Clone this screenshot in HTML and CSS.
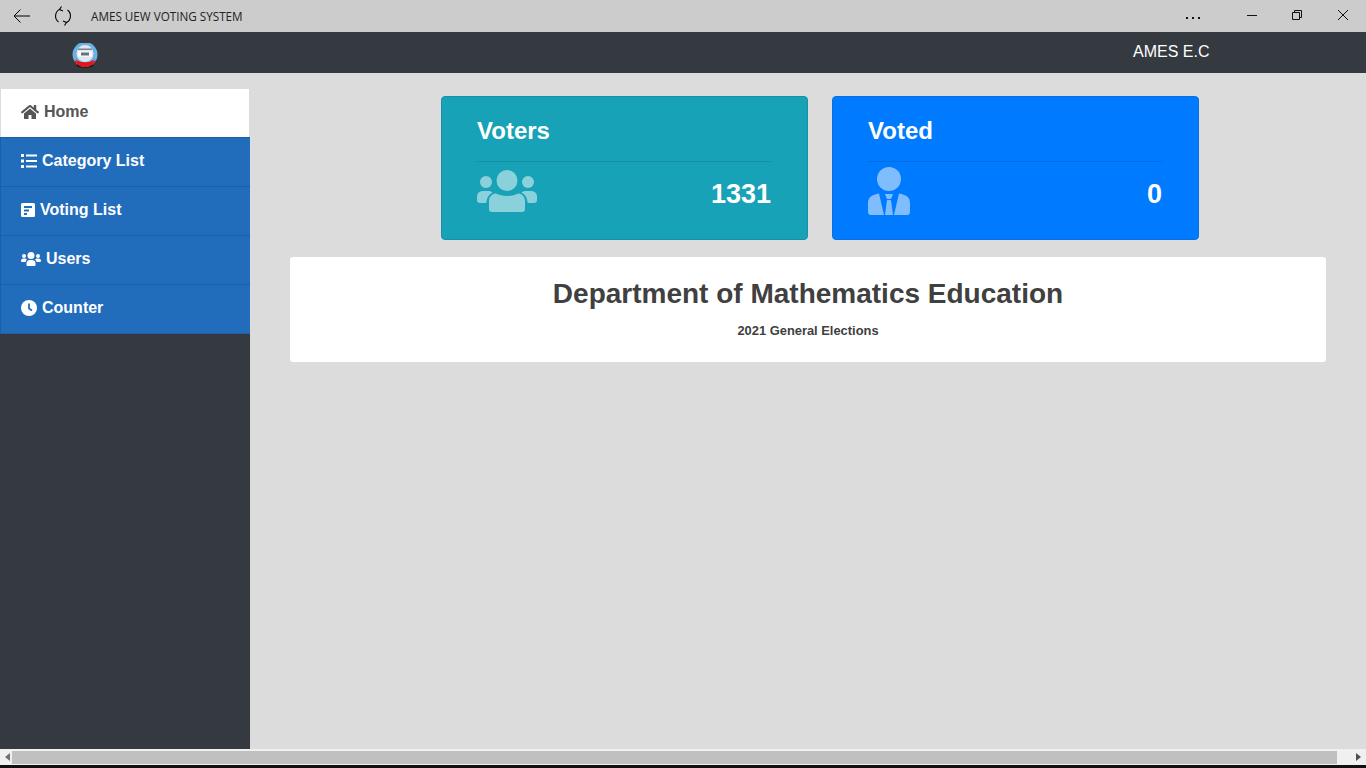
FILE: index.html
```html
<!DOCTYPE html>
<html lang="en">
<head>
  <meta charset="UTF-8" />
  <title>AMES UEW VOTING SYSTEM</title>
  <link rel="stylesheet" href="styles.css">
</head>

<body>
  <div class="titlebar">
    <div class="titlebar-left">
      <svg class="tb-icon" width="20" height="16" viewBox="0 0 20 16"><path d="M18 8H2M8.500 1.500L2 8l6.500 6.500" fill="none" stroke="#000" stroke-width="1"/></svg>
      <svg class="tb-icon" width="18" height="20" viewBox="0 0 18 20"><path d="M6.500 3A7.500 7.500 0 0 0 4.500 16M11.500 17A7.500 7.500 0 0 0 13.500 4M7.500 .5L5.500 3.500 9 5M10.500 19.500L12.500 16.500 9 15" fill="none" stroke="#000" stroke-width="1.100"/></svg>
      <span class="app-title">AMES UEW VOTING SYSTEM</span>
    </div>
    <div class="titlebar-right">
      <svg class="win-btn dots" width="16" height="16" viewBox="0 0 16 16"><path d="M1 9h2v2H1zM7 9h2v2H7zM13 9h2v2h-2z" fill="#111"/></svg>
      <svg class="win-btn min" width="12" height="12" viewBox="0 0 12 12"><path d="M1 5.500h10" stroke="#111" fill="none"/></svg>
      <svg class="win-btn restore" width="12" height="12" viewBox="0 0 12 12"><path d="M1.500 3.500h7v7h-7zM3.500 3.500v-2h7v7h-2" stroke="#111" fill="none"/></svg>
      <svg class="win-btn close" width="12" height="12" viewBox="0 0 12 12"><path d="M1 1l10 10M11 1L1 11" stroke="#111" fill="none"/></svg>
    </div>
  </div>

  <header class="navbar">
    <svg class="logo" width="26" height="25" viewBox="0 0 26 25">
      <ellipse cx="13" cy="22.500" rx="8.500" ry="2" fill="#111"/>
      <circle cx="13" cy="11.500" r="12.500" fill="#6ab2e6"/>
      <path d="M2 17.500a12.500 12.500 0 0 0 22 0q-11 4-22 0z" fill="#e8141c"/>
      <path d="M3 16a12.500 12.500 0 0 0 20 0q-10 7-20 0z" fill="#e8141c"/>
      <circle cx="13" cy="10.500" r="8.500" fill="#dfe8f0"/>
      <path d="M6 5.500h14V7H6z" fill="#7a8590"/>
      <path d="M6 8.500h14v5H6z" fill="#fff"/>
      <path d="M9 9.500h8v3H9z" fill="#66717b"/>
    </svg>
    <span class="brand">AMES E.C</span>
  </header>

  <div class="layout">
    <aside class="sidebar">
      <nav>
        <a href="#" class="side-link active">
          <svg class="side-icon" width="18" height="16" viewBox="0 0 576 512"><path fill="currentColor" d="M280.370 148.260L96 300.110V464a16 16 0 0 0 16 16l112.060-.29a16 16 0 0 0 15.920-16V368a16 16 0 0 1 16-16h64a16 16 0 0 1 16 16v95.640a16 16 0 0 0 16 16.050L464 480a16 16 0 0 0 16-16V300L295.670 148.260a12.190 12.190 0 0 0-15.300 0zM571.600 251.470L488 182.560V44.050a12 12 0 0 0-12-12h-56a12 12 0 0 0-12 12v72.610L318.470 43a48 48 0 0 0-61 0L4.340 251.470a12 12 0 0 0-1.600 16.900l25.500 31A12 12 0 0 0 45.150 301l235.220-193.740a12.190 12.190 0 0 1 15.300 0L530.900 301a12 12 0 0 0 16.900-1.600l25.500-31a12 12 0 0 0-1.700-16.930z"/></svg>
          Home
        </a>
        <a href="#" class="side-link">
          <svg class="side-icon" width="16" height="14" viewBox="0 0 16 14"><path fill="currentColor" d="M0 0h3v3H0zM0 5.500h3v3H0zM0 11h3v3H0zM5 .5h11v2H5zM5 6h11v2H5zM5 11.500h11v2H5z"/></svg>
          Category List
        </a>
        <a href="#" class="side-link">
          <svg class="side-icon" width="14" height="14" viewBox="0 0 14 14"><path fill="currentColor" fill-rule="evenodd" d="M1.500 0h11A1.500 1.500 0 0 1 14 1.500v11a1.500 1.500 0 0 1-1.500 1.500h-11A1.500 1.500 0 0 1 0 12.500v-11A1.500 1.500 0 0 1 1.500 0zM3 3v2h8V3zM3 6.500v2h5v-2zM3 10v2h3v-2z"/></svg>
          Voting List
        </a>
        <a href="#" class="side-link">
          <svg class="side-icon" width="20" height="14" viewBox="0 0 20 14"><g fill="currentColor"><circle cx="3" cy="4" r="2"/><circle cx="17" cy="4" r="2"/><circle cx="10" cy="3.500" r="3.500"/><path d="M0 9a2.500 2.500 0 0 1 2.500-2.500h2L6 7.500a4 4 0 0 0-1.500 2.500H1a1 1 0 0 1-1-1zM20 9a2.500 2.500 0 0 0-2.500-2.500h-2L14 7.500a4 4 0 0 1 1.500 2.500H19a1 1 0 0 0 1-1zM5.500 11.500a3.500 3.500 0 0 1 3-3.500h3a3.500 3.500 0 0 1 3 3.500V13a1 1 0 0 1-1 1h-7a1 1 0 0 1-1-1z"/></g></svg>
          Users
        </a>
        <a href="#" class="side-link last">
          <svg class="side-icon" width="16" height="16" viewBox="0 0 16 16"><circle cx="8" cy="8" r="8" fill="currentColor"/><path d="M8 3.500V8.500l3 2" fill="none" stroke="#226cbc" stroke-width="1.800"/></svg>
          Counter
        </a>
      </nav>
    </aside>

    <main class="content">
      <div class="stats">
        <div class="stat-card teal">
          <h3>Voters</h3>
          <div class="stat-body">
            <svg class="stat-icon users" width="60" height="42" viewBox="0 0 60 42">
              <circle cx="30" cy="10.500" r="10.500"/>
              <circle cx="9" cy="12" r="6"/>
              <circle cx="51" cy="12" r="6"/>
              <path d="M12 31c0-5 4-7.500 7-7.500 3 1.500 6.500 2.500 11 2.500s8-1 11-2.500c3 0 7 2.500 7 7.500v8a3 3 0 0 1-3 3H15a3 3 0 0 1-3-3z"/>
              <path d="M0 26.500A5.500 5.500 0 0 1 5.500 21h6c1.500 0 3 .5 4 1.500-3 1.500-5.500 4.500-6 9.500l-.5 1H3a3 3 0 0 1-3-3z"/>
              <path d="M60 26.500A5.500 5.500 0 0 0 54.500 21h-6c-1.500 0-3 .5-4 1.500 3 1.500 5.500 4.500 6 9.500l.5 1h6a3 3 0 0 0 3-3z"/>
            </svg>
            <span class="stat-num">1331</span>
          </div>
        </div>
        <div class="stat-card blue">
          <h3>Voted</h3>
          <div class="stat-body">
            <svg class="stat-icon" width="42" height="48" viewBox="0 0 42 48">
              <circle cx="21" cy="12" r="12"/>
              <path d="M0 36c0-6 4-8 11-9.500L16 48H3a3 3 0 0 1-3-3z"/>
              <path d="M42 36c0-6-4-8-11-9.500L26 48h13a3 3 0 0 0 3-3z"/>
              <path d="M17 27h8l-2 5h-4zM19 33h4l2 15h-8z"/>
            </svg>
            <span class="stat-num">0</span>
          </div>
        </div>
      </div>

      <section class="notice">
        <h2>Department of Mathematics Education</h2>
        <p>2021 General Elections</p>
      </section>
    </main>
  </div>

  <div class="hscroll">
    <svg class="arrow" width="6" height="8" viewBox="0 0 6 8"><path d="M5 0v8L0 4z" fill="#707070"/></svg>
    <div class="thumb"></div>
    <svg class="arrow right" width="6" height="8" viewBox="0 0 6 8"><path d="M1 0v8l5-4z" fill="#505050"/></svg>
  </div>
  <div class="screen-edge"></div>
</body>
</html>
```

FILE: styles.css
```css
:root {
  --dark: #343a40;
  --page-bg: #dcdcdc;
  --side-blue: #226cbc;
  --side-line: #1d5fa6;
  --text: #404040;
}

* {
  box-sizing: border-box;
}

html, body {
  height: 100%;
}

body {
  margin: 0;
  display: flex;
  flex-direction: column;
  height: 768px;
  overflow: hidden;
  font-family: 'Liberation Sans', sans-serif;
  background-color: var(--page-bg);
  color: var(--text);
}

/* window chrome */
.titlebar {
  height: 32px;
  flex: none;
  display: flex;
  justify-content: space-between;
  align-items: center;
  background-color: #cccccc;
}

.titlebar-left {
  display: flex;
  align-items: center;
  padding-left: 12px;
}

.tb-icon {
  margin-right: 22px;
  flex: none;
}

.app-title {
  font-family: 'Open Sans', sans-serif;
  font-size: 11.700px;
  color: #222;
  margin-left: -3px;
}

.titlebar-right {
  display: flex;
  align-items: center;
  padding-right: 17px;
}

.win-btn.min {
  margin-left: 45px;
  margin-top: -1px;
}

.win-btn.restore {
  margin-left: 33px;
  margin-top: -2px;
}

.win-btn.close {
  margin-left: 34px;
  margin-top: -3px;
}

.navbar {
  height: 41px;
  flex: none;
  display: flex;
  align-items: center;
  background-color: var(--dark);
  padding-left: 72px;
}

.logo {
  flex: none;
  margin-top: 6px;
  filter: blur(0.4px);
}

.brand {
  margin-left: 1035px;
  margin-top: -2px;
  font-size: 16px;
  color: #fff;
}

.layout {
  flex: 1;
  display: flex;
  min-height: 0;
}

/* sidebar */
.sidebar {
  width: 250px;
  flex: none;
  margin-top: 16px;
  background-color: var(--dark);
}

.side-link {
  display: flex;
  align-items: center;
  gap: 5px;
  height: 49px;
  padding: 0 0 2px 20px;
  font-size: 16px;
  font-weight: 700;
  text-decoration: none;
  color: #fff;
  background-color: var(--side-blue);
  border-top: 1px solid var(--side-line);
  border-left: 1px solid var(--side-line);
}

.side-link.last {
  height: 50px;
  padding-bottom: 3px;
  border-bottom: 1px solid var(--side-line);
}

.side-link.active {
  height: 48px;
  color: #555;
  background-color: #fff;
  border: none;
  border-left: 1px solid var(--page-bg);
  border-right: 1px solid var(--page-bg);
}

.side-icon {
  flex: none;
}

/* main */
.content {
  flex: 1;
  padding: 23px 40px 0;
}

.stats {
  display: flex;
  gap: 24px;
  padding-left: 151px;
}

.stat-card {
  width: 367px;
  height: 144px;
  padding: 20px 36px 0 35px;
  border-radius: 4px;
  border: 1px solid transparent;
  color: #fff;
}

.stat-card h3 {
  margin: 0;
  height: 44px;
  font-size: 24px;
  line-height: 28px;
  font-weight: 700;
}

.stat-card.teal {
  background-color: #17a2b8;
  border-color: #1592a6;
}

.stat-card.blue {
  background-color: #007bff;
  border-color: #0870e0;
}

.stat-body {
  display: flex;
  justify-content: space-between;
  border-top: 1px solid rgba(0, 0, 0, 0.1);
}

.stat-icon {
  fill: rgba(255, 255, 255, 0.5);
  margin-top: 5px;
}

.stat-icon.users {
  margin-top: 8px;
}

.stat-num {
  font-size: 27px;
  font-weight: 700;
  line-height: 31px;
  margin-top: 17px;
}

.notice {
  margin-top: 17px;
  height: 105px;
  padding-top: 21px;
  text-align: center;
  background-color: #fff;
  border-radius: 3px;
}

.notice h2 {
  margin: 0;
  font-size: 28px;
  line-height: 32px;
  font-weight: 700;
}

.notice p {
  margin: 13px 0 0;
  font-size: 12.900px;
  line-height: 16px;
  font-weight: 700;
}

/* bottom scrollbar */
.hscroll {
  height: 16px;
  flex: none;
  display: flex;
  align-items: center;
  padding: 0 5px;
  background-color: #f0f0f0;
}

.thumb {
  width: 1325px;
  height: 13px;
  margin-left: 1px;
  background-color: #c0c0c0;
}

.arrow.right {
  margin-left: auto;
}

.screen-edge {
  height: 3px;
  flex: none;
  background-color: #111;
}
```
